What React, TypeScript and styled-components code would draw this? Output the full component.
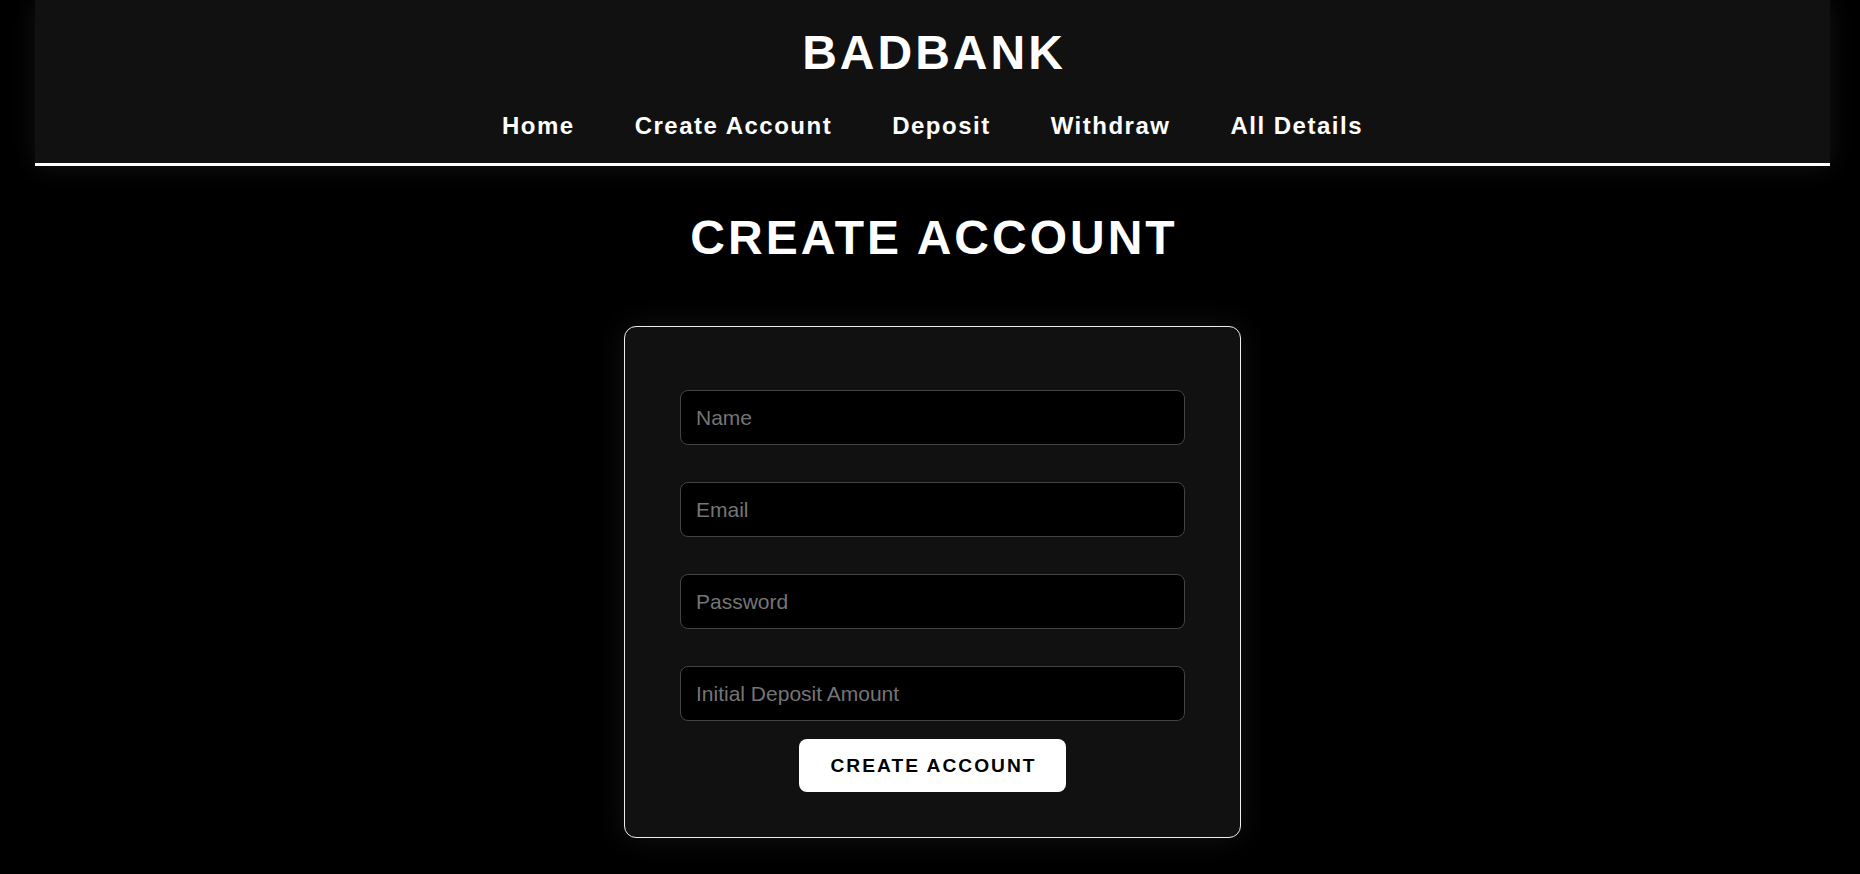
import React from "react";
import styled, { createGlobalStyle } from "styled-components";

const GlobalStyle = createGlobalStyle`
  html, body {
    margin: 0;
    padding: 0;
    background: #000;
    font-family: "Liberation Sans", Arial, sans-serif;
    color: #fff;
  }
  * { box-sizing: border-box; }
`;

const Page = styled.div`
  min-height: 874px;
  padding: 0 30px 0 35px;
  display: flex;
  flex-direction: column;
  align-items: stretch;
`;

const Header = styled.header`
  background: #111;
  border-bottom: 3px solid #fff;
  box-shadow: 0 0 24px rgba(255, 255, 255, 0.08);
  padding: 25px 0 23px;
  display: flex;
  flex-direction: column;
  align-items: center;
  gap: 32px;
`;

const Brand = styled.h1`
  margin: 0;
  font-size: 48px;
  font-weight: 700;
  letter-spacing: 3px;
  line-height: normal;
  padding-left: 3px;
`;

const Nav = styled.nav`
  display: flex;
  gap: 60px;
`;

const NavLink = styled.a`
  color: #fff;
  text-decoration: none;
  font-size: 24px;
  font-weight: 700;
  letter-spacing: 1.5px;
  line-height: normal;
  cursor: pointer;
`;

const Main = styled.main`
  display: flex;
  flex-direction: column;
  align-items: center;
  padding-top: 44px;
`;

const Title = styled.h2`
  margin: 0 0 61px;
  font-size: 48px;
  font-weight: 700;
  letter-spacing: 3px;
  line-height: normal;
  padding-left: 3px;
`;

const Card = styled.form`
  width: 617px;
  background: #111;
  border: 1px solid #eee;
  border-radius: 12px;
  box-shadow: 0 0 30px rgba(255, 255, 255, 0.08);
  padding: 63px 55px 45px;
  display: flex;
  flex-direction: column;
  align-items: center;
`;

const Fields = styled.div`
  width: 100%;
  display: flex;
  flex-direction: column;
  gap: 37px;
`;

const Input = styled.input`
  width: 100%;
  height: 55px;
  background: #000;
  border: 1px solid #444;
  border-radius: 8px;
  padding: 0 15px;
  color: #fff;
  font-family: "Liberation Sans", Arial, sans-serif;
  font-size: 21px;
  outline: none;
  &::placeholder {
    color: #757575;
  }
`;

const Button = styled.button`
  margin-top: 18px;
  height: 53px;
  padding: 0 29px 0 31px;
  background: #fff;
  color: #000;
  border: none;
  border-radius: 8px;
  font-family: "Liberation Sans", Arial, sans-serif;
  font-size: 19.2px;
  font-weight: 700;
  letter-spacing: 2px;
  cursor: pointer;
`;

const links = ["Home", "Create Account", "Deposit", "Withdraw", "All Details"];
const fields = [
  { placeholder: "Name", type: "text" },
  { placeholder: "Email", type: "email" },
  { placeholder: "Password", type: "password" },
  { placeholder: "Initial Deposit Amount", type: "number" },
];

export default function App() {
  return (
    <>
      <GlobalStyle />
      <Page>
        <Header>
          <Brand>BADBANK</Brand>
          <Nav>
            {links.map((l) => (
              <NavLink key={l}>{l}</NavLink>
            ))}
          </Nav>
        </Header>
        <Main>
          <Title>CREATE ACCOUNT</Title>
          <Card onSubmit={(e) => e.preventDefault()}>
            <Fields>
              {fields.map((f) => (
                <Input key={f.placeholder} type={f.type} placeholder={f.placeholder} />
              ))}
            </Fields>
            <Button type="submit">CREATE ACCOUNT</Button>
          </Card>
        </Main>
      </Page>
    </>
  );
}
